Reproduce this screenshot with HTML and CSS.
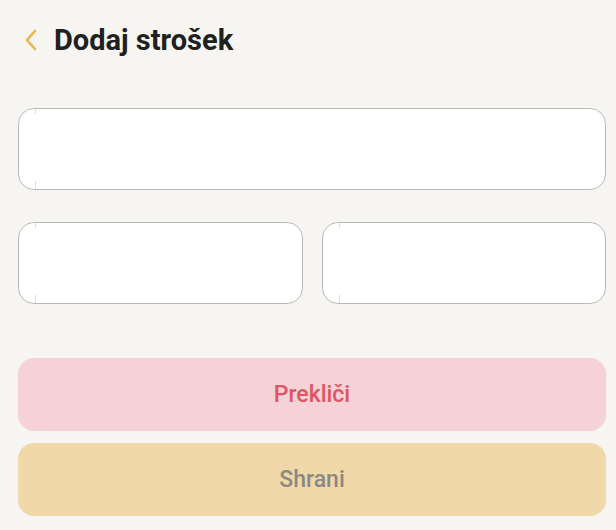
FILE: index.html
```html
<!DOCTYPE html>
<html lang="sl">
<head>
<meta charset="utf-8">
<title>Dodaj strošek</title>
<link rel="stylesheet" href="styles.css">
</head>
<body>
<div class="screen">
  <header class="topbar">
    <button class="back" aria-label="Nazaj">
      <svg width="14" height="22" viewBox="0 0 14 22"><path d="M11 2 L3 11 L11 20" fill="none" stroke="#ecb44c" stroke-width="2.6" stroke-linecap="round" stroke-linejoin="round"/></svg>
    </button>
    <h1 class="title">Dodaj strošek</h1>
  </header>
  <form class="form">
    <div class="field"></div>
    <div class="row">
      <div class="field"></div>
      <div class="field"></div>
    </div>
    <div class="actions">
      <button type="button" class="btn btn-cancel">Prekliči</button>
      <button type="button" class="btn btn-save">Shrani</button>
    </div>
  </form>
</div>
</body>
</html>
```
FILE: styles.css
```css
html, body {
  margin: 0;
  padding: 0;
  background: #f6f5f1;
  font-family: Roboto, "Noto Sans", sans-serif;
}
.screen {
  width: 616px;
  height: 530px;
  box-sizing: border-box;
  padding: 0 10px 0 18px;
}
.topbar {
  display: flex;
  align-items: center;
  height: 80px;
  gap: 16px;
}
.back {
  border: 0;
  background: none;
  padding: 0;
  margin-left: 6px;
  display: flex;
  align-items: center;
  cursor: pointer;
}
.title {
  margin: 0;
  font-size: 29px;
  font-weight: 700;
  color: #202020;
}
.form {
  display: flex;
  flex-direction: column;
  margin-top: 28px;
}
.field {
  position: relative;
  box-sizing: border-box;
  height: 82px;
  background: #fff;
  border: 1.5px solid #b9b9b9;
  border-radius: 16px;
}
.field::before, .field::after {
  content: "";
  position: absolute;
  left: 16px;
  width: 1px;
  background: #dedede;
}
.field::before { top: 0; height: 5px; }
.field::after { bottom: 0; height: 8px; }
.row {
  display: grid;
  grid-template-columns: 1fr 1fr;
  gap: 19px;
  margin-top: 32px;
}
.actions {
  display: flex;
  flex-direction: column;
  gap: 12px;
  margin-top: 54px;
}
.btn {
  height: 73px;
  border: 0;
  border-radius: 16px;
  font-family: Roboto, "Noto Sans", sans-serif;
  font-size: 23px;
  font-weight: 500;
}
.btn-cancel {
  background: #f5d2d6;
  color: #e05563;
}
.btn-save {
  background: #f1d8a8;
  color: #8b8a82;
}
```
